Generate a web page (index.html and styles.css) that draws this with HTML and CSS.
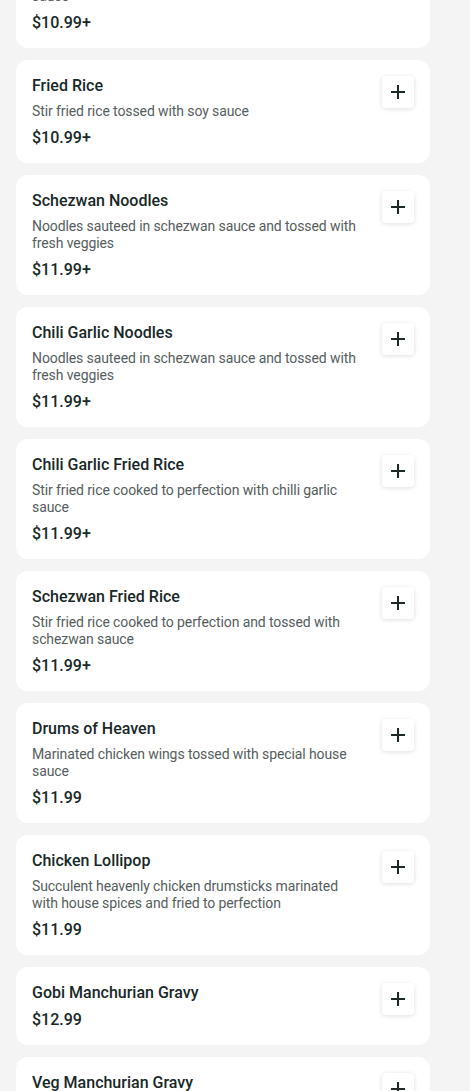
FILE: index.html
```html
<!DOCTYPE html>
<html lang="en">
<head>
    <meta charset="UTF-8">
    <meta name="viewport" content="width=device-width, initial-scale=1.0">
    <title>Menu</title>
    <link rel="stylesheet" href="styles.css">
</head>
<body>

<div class="menu">
    <div class="item">
        <div class="info">
            <div class="name">Veg Fried Rice</div>
            <div class="desc">Stir fried rice cooked with fresh vegetables and soy sauce</div>
            <div class="price">$10.99+</div>
        </div>
        <button class="add" type="button"><svg viewBox="0 0 16 16"><path d="M8 1v14M1 8h14"/></svg></button>
    </div>
    <div class="item">
        <div class="info">
            <div class="name">Fried Rice</div>
            <div class="desc">Stir fried rice tossed with soy sauce</div>
            <div class="price">$10.99+</div>
        </div>
        <button class="add" type="button"><svg viewBox="0 0 16 16"><path d="M8 1v14M1 8h14"/></svg></button>
    </div>
    <div class="item">
        <div class="info">
            <div class="name">Schezwan Noodles</div>
            <div class="desc">Noodles sauteed in schezwan sauce and tossed with fresh veggies</div>
            <div class="price">$11.99+</div>
        </div>
        <button class="add" type="button"><svg viewBox="0 0 16 16"><path d="M8 1v14M1 8h14"/></svg></button>
    </div>
    <div class="item">
        <div class="info">
            <div class="name">Chili Garlic Noodles</div>
            <div class="desc">Noodles sauteed in schezwan sauce and tossed with fresh veggies</div>
            <div class="price">$11.99+</div>
        </div>
        <button class="add" type="button"><svg viewBox="0 0 16 16"><path d="M8 1v14M1 8h14"/></svg></button>
    </div>
    <div class="item">
        <div class="info">
            <div class="name">Chili Garlic Fried Rice</div>
            <div class="desc">Stir fried rice cooked to perfection with chilli garlic sauce</div>
            <div class="price">$11.99+</div>
        </div>
        <button class="add" type="button"><svg viewBox="0 0 16 16"><path d="M8 1v14M1 8h14"/></svg></button>
    </div>
    <div class="item">
        <div class="info">
            <div class="name">Schezwan Fried Rice</div>
            <div class="desc">Stir fried rice cooked to perfection and tossed with schezwan sauce</div>
            <div class="price">$11.99+</div>
        </div>
        <button class="add" type="button"><svg viewBox="0 0 16 16"><path d="M8 1v14M1 8h14"/></svg></button>
    </div>
    <div class="item">
        <div class="info">
            <div class="name">Drums of Heaven</div>
            <div class="desc">Marinated chicken wings tossed with special house sauce</div>
            <div class="price">$11.99</div>
        </div>
        <button class="add" type="button"><svg viewBox="0 0 16 16"><path d="M8 1v14M1 8h14"/></svg></button>
    </div>
    <div class="item">
        <div class="info">
            <div class="name">Chicken Lollipop</div>
            <div class="desc">Succulent heavenly chicken drumsticks marinated with house spices and fried to perfection</div>
            <div class="price">$11.99</div>
        </div>
        <button class="add" type="button"><svg viewBox="0 0 16 16"><path d="M8 1v14M1 8h14"/></svg></button>
    </div>
    <div class="item">
        <div class="info">
            <div class="name">Gobi Manchurian Gravy</div>
            <div class="price">$12.99</div>
        </div>
        <button class="add" type="button"><svg viewBox="0 0 16 16"><path d="M8 1v14M1 8h14"/></svg></button>
    </div>
    <div class="item">
        <div class="info">
            <div class="name">Veg Manchurian Gravy</div>
            <div class="price">$12.99</div>
        </div>
        <button class="add" type="button"><svg viewBox="0 0 16 16"><path d="M8 1v14M1 8h14"/></svg></button>
    </div>
</div>

</body>
</html>
```

FILE: styles.css
```css
html, body {
    margin: 0;
    padding: 0;
    background: #f4f4f4;
    font-family: Roboto, "Liberation Sans", sans-serif;
}
.menu {
    width: 414px;
    margin: -72px 0 0 16px;
    display: flex;
    flex-direction: column;
    gap: 12px;
}
.item {
    background: #fff;
    border-radius: 12px;
    padding: 16px;
    display: flex;
    gap: 16px;
    align-items: flex-start;
}
.info {
    flex: 1;
    display: flex;
    flex-direction: column;
    gap: 8px;
}
.name {
    font-size: 16px;
    line-height: 19px;
    font-weight: 500;
    color: #182828;
}
.desc {
    font-size: 14px;
    line-height: 17px;
    letter-spacing: -0.1px;
    color: #555d5d;
}
.price {
    font-size: 16px;
    line-height: 19px;
    font-weight: 500;
    color: #182828;
}
/* bouton + */
.add {
    width: 32px;
    height: 32px;
    flex: none;
    border: 0;
    padding: 0;
    border-radius: 4px;
    background: #fff;
    box-shadow: 0 1px 5px rgba(0, 0, 0, 0.13);
    display: flex;
    align-items: center;
    justify-content: center;
    cursor: pointer;
}
.add svg {
    width: 16px;
    height: 16px;
    stroke: #1b2929;
    stroke-width: 2;
    fill: none;
}
```
